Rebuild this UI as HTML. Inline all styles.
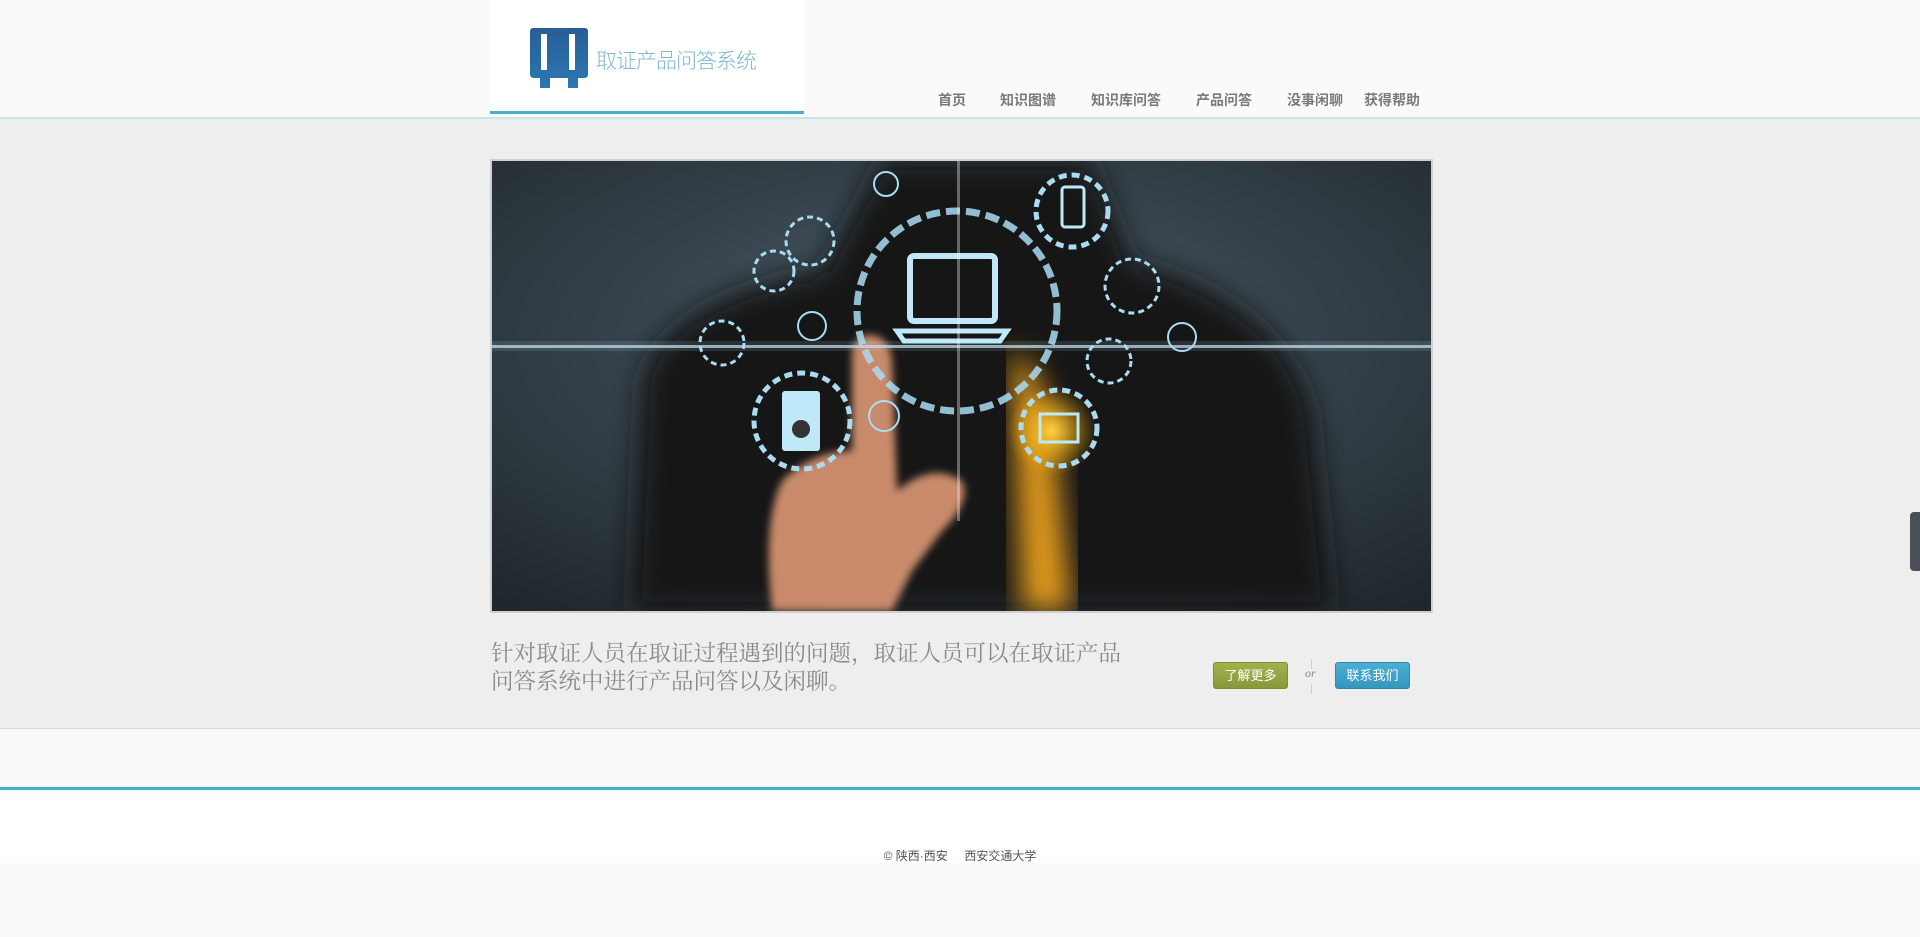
<!DOCTYPE html>
<html><head><meta charset="utf-8">
<style>
*{margin:0;padding:0;box-sizing:border-box}
body{width:1920px;height:937px;background:#fafafa;font-family:"Liberation Sans","Noto Sans CJK SC",sans-serif;position:relative;overflow:hidden}
.header{position:absolute;left:0;top:0;width:1920px;height:119px;background:#fafafa;border-bottom:2px solid #c9e6e6}
.logo{position:absolute;left:490px;top:0;width:314px;height:114px;background:#fff;border-bottom:3px solid #4aaecd}
.logo .t{position:absolute;left:106px;top:45px;font-size:21px;color:#7fb8d2;font-weight:300;letter-spacing:-1px}
.nav a{position:absolute;top:90px;font-size:14px;font-weight:bold;color:#7a7a7a;text-decoration:none}
.main{position:absolute;left:0;top:119px;width:1920px;height:610px;background:#eeeeee;border-bottom:1px solid #ddd}
.pic{position:absolute;left:490px;top:159px;width:943px;height:454px;border:2px solid #cfcfcf;background:#222;overflow:hidden}
.txt{position:absolute;left:491px;font-family:"Liberation Serif","Noto Serif CJK SC",serif;font-size:22.5px;line-height:28px;color:#8a8a8a;width:700px;white-space:nowrap}
.btn{position:absolute;top:662px;width:75px;height:27px;border-radius:3px;color:#fff;font-size:13px;text-align:center;line-height:26px}
.g{left:1213px;background:linear-gradient(#a0b34a,#87993a);border:1px solid #7c8d34}
.b{left:1335px;background:linear-gradient(#4bb0d4,#3596be);border:1px solid #2f87ad}
.or{position:absolute;left:1305px;font-style:italic;font-size:12px;color:#888;font-family:"Liberation Serif",serif}
.vl{position:absolute;left:1311px;width:1px;background:#ccc}
.band{position:absolute;left:0;top:729px;width:1920px;height:61px;background:#fafafa;border-bottom:3px solid #4aaecd}
.foot{position:absolute;left:0;top:793px;width:1920px;height:70px;background:#fff}
.foot div{position:absolute;top:54px;width:1920px;text-align:center;font-size:12px;color:#555}
.tab{position:absolute;left:1910px;top:512px;width:10px;height:59px;background:#4a5058;border-radius:4px 0 0 4px}
</style></head><body>
<div class="header">
 <div class="logo">
  <svg style="position:absolute;left:40px;top:28px" width="58" height="62" viewBox="0 0 58 62">
   <defs><linearGradient id="lg" x1="0" y1="0" x2="0" y2="1"><stop offset="0" stop-color="#2a5d95"/><stop offset="1" stop-color="#2b78b2"/></linearGradient></defs>
   <path d="M3 0H55Q58 0 58 4V46Q58 50 54 50H48V60H38V50H20V60H10V50H4Q0 50 0 46V4Q0 0 3 0Z" fill="url(#lg)"/>
   <rect x="11" y="6" width="6" height="36" fill="#fff"/><rect x="39" y="6" width="6" height="36" fill="#fff"/>
  </svg>
  <div class="t">取证产品问答系统</div>
 </div>
 <div class="nav">
  <a style="left:938px">首页</a><a style="left:1000px">知识图谱</a><a style="left:1091px">知识库问答</a><a style="left:1196px">产品问答</a><a style="left:1287px">没事闲聊</a><a style="left:1364px">获得帮助</a>
 </div>
</div>
<div class="main">
 <div class="pic" style="top:40px">
  <svg width="939" height="450" viewBox="0 0 939 450">
   <defs>
    <radialGradient id="bg" cx="0.5" cy="0.4" r="0.8"><stop offset="0" stop-color="#4a5c68"/><stop offset="1" stop-color="#1d2429"/></radialGradient>
    <filter id="bl"><feGaussianBlur stdDeviation="14"/></filter>
    <filter id="bl2"><feGaussianBlur stdDeviation="4"/></filter>
    <radialGradient id="gl" cx="0.5" cy="0.5" r="0.5"><stop offset="0" stop-color="#ffd040"/><stop offset="1" stop-color="#ffb000" stop-opacity="0"/></radialGradient>
   </defs>
   <rect width="939" height="450" fill="url(#bg)"/>
   <path d="M140 450L150 220Q170 140 330 110L390 0H600L640 100Q790 140 820 250L840 450Z" fill="#141214" filter="url(#bl)"/>
   <path d="M520 190Q545 200 560 260L580 450H530Z" fill="#e09a1e" filter="url(#bl)"/>
   <circle cx="560" cy="270" r="45" fill="url(#gl)"/>
   <path d="M280 450Q270 360 290 320Q320 290 360 290L360 190Q365 170 385 175Q398 180 400 200L405 330Q440 300 470 320Q480 340 450 370L420 410L400 450Z" fill="#c88a6a" filter="url(#bl2)"/>
   <rect x="0" y="184" width="939" height="3" fill="#cfe8f4" opacity="0.7"/>
   <rect x="0" y="180" width="939" height="10" fill="#a8d0e4" opacity="0.15"/>
   <circle cx="465" cy="150" r="100" fill="none" stroke="#a9dcf2" stroke-width="7" stroke-dasharray="14 6" opacity="0.85"/>
   <rect x="418" y="95" width="85" height="65" rx="4" fill="none" stroke="#bfe8f8" stroke-width="6"/>
   <path d="M405 170H515L508 180H412Z" fill="none" stroke="#bfe8f8" stroke-width="5"/>
   <circle cx="580" cy="50" r="36" fill="none" stroke="#a9dcf2" stroke-width="5" stroke-dasharray="8 5"/>
   <rect x="570" y="26" width="22" height="40" rx="3" fill="none" stroke="#bfe8f8" stroke-width="3"/>
   <circle cx="310" cy="260" r="48" fill="none" stroke="#a9dcf2" stroke-width="5" stroke-dasharray="8 5"/>
   <rect x="290" y="230" width="38" height="60" rx="3" fill="#bfe8f8"/><circle cx="309" cy="268" r="9" fill="#333"/>
   <circle cx="567" cy="267" r="38" fill="none" stroke="#a9dcf2" stroke-width="5" stroke-dasharray="8 5"/>
   <rect x="548" y="253" width="38" height="28" fill="none" stroke="#bfe8f8" stroke-width="3"/>
   <circle cx="640" cy="125" r="27" fill="none" stroke="#a9dcf2" stroke-width="3" stroke-dasharray="6 4"/>
   <circle cx="318" cy="80" r="24" fill="none" stroke="#a9dcf2" stroke-width="3" stroke-dasharray="6 4"/>
   <circle cx="282" cy="110" r="20" fill="none" stroke="#a9dcf2" stroke-width="3" stroke-dasharray="6 4"/>
   <circle cx="230" cy="182" r="22" fill="none" stroke="#a9dcf2" stroke-width="3" stroke-dasharray="6 4"/>
   <circle cx="617" cy="200" r="22" fill="none" stroke="#a9dcf2" stroke-width="3" stroke-dasharray="6 4"/>
   <circle cx="320" cy="165" r="14" fill="none" stroke="#a9dcf2" stroke-width="2"/>
   <circle cx="392" cy="255" r="15" fill="none" stroke="#a9dcf2" stroke-width="2"/>
   <circle cx="690" cy="176" r="14" fill="none" stroke="#a9dcf2" stroke-width="2"/>
   <circle cx="394" cy="23" r="12" fill="none" stroke="#a9dcf2" stroke-width="2"/>
   <rect x="465" y="0" width="3" height="360" fill="#fff" opacity="0.35"/>
  </svg>
 </div>
 <div class="txt" style="top:521px">针对取证人员在取证过程遇到的问题，取证人员可以在取证产品<br>问答系统中进行产品问答以及闲聊。</div>
 <div class="btn g" style="top:543px">了解更多</div>
 <div class="vl" style="top:540px;height:10px"></div>
 <div class="or" style="top:547px">or</div>
 <div class="vl" style="top:565px;height:10px"></div>
 <div class="btn b" style="top:543px">联系我们</div>
</div>
<div class="band"></div>
<div class="foot"><div>© 陕西·西安 &nbsp;&nbsp;&nbsp; 西安交通大学</div></div>
<div class="tab"></div>
</body></html>
